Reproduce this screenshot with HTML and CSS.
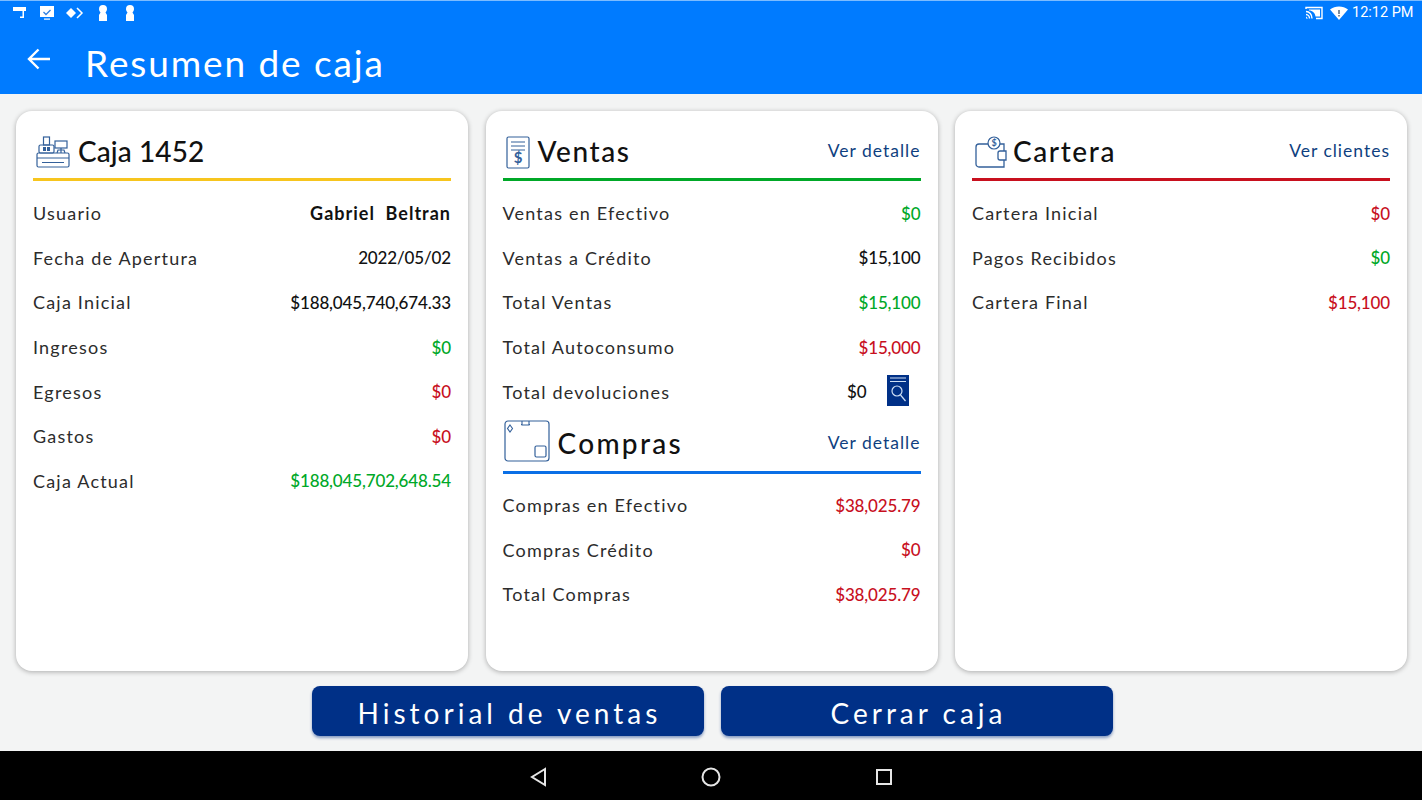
FILE: index.html
```html
<!DOCTYPE html>
<html>
  <head>
    <meta charset="UTF-8" />
    <title>Resumen de caja</title>
    <link rel="stylesheet" href="styles.css">
  </head>
  <body>
    <header class="appbar">
      <div class="status-bar">
        <div class="status-icons">
          <svg class="status-icon" viewBox="0 0 16 16"><path d="M1 2h13v4h-2v7H8v-1.400h2.500V6H1z" fill="#fff"/></svg>
          <svg class="status-icon" viewBox="0 0 16 16"><path d="M1 1h14v11H1z" fill="#fff"/><path d="M4.500 7l2.500 2.500L11.500 5" fill="none" stroke="#2f7fe0" stroke-width="1.300"/><path d="M5 13.500h6v1.200H5z" fill="#fff"/></svg>
          <svg class="status-icon wide" viewBox="0 0 18 16"><path d="M5 3l5 5-5 5-5-5z" fill="#fff"/><path d="M11 3l5 5-5 5" fill="none" stroke="#fff" stroke-width="1.500"/></svg>
          <svg class="status-icon" viewBox="0 0 16 16"><path d="M8 0a4 4 0 0 1 4 4c0 1.500-.8 2.500-1.500 3.500L12 10v6H4v-6l1.500-2.500C4.800 6.500 4 5.500 4 4a4 4 0 0 1 4-4z" fill="#fff"/></svg>
          <svg class="status-icon" viewBox="0 0 16 16"><path d="M8 0a4 4 0 0 1 4 4c0 1.500-.8 2.500-1.500 3.500L12 10v6H4v-6l1.500-2.500C4.800 6.500 4 5.500 4 4a4 4 0 0 1 4-4z" fill="#fff"/></svg>
        </div>
        <div class="status-right">
          <svg class="status-icon cast" viewBox="0 0 18 14"><path d="M1 3V1.500h16v11h-6M1 5.500c3.500 0 6 3 6 7M1 8.500c2 0 3.500 2 3.500 4" fill="none" stroke="#fff" stroke-width="1.400"/><path d="M1 10.500l2 2H1zM4 3.500h11v7h-4.500C10 7 7.500 4.500 4 4.500z" fill="#fff"/></svg>
          <svg class="status-icon wifi" viewBox="0 0 18 14"><path d="M0 3.500C5 -.5 13 -.5 18 3.500L9 14z" fill="#fff"/><path d="M8 4h2v4H8zM8 9h2v1.500H8z" fill="#7d8c9c"/></svg>
          <span class="clock">12:12 PM</span>
        </div>
      </div>
      <div class="toolbar">
        <svg class="back" viewBox="0 0 24 24"><path d="M23 12H2M11.500 2.500L2 12l9.500 9.500" fill="none" stroke="#fff" stroke-width="2.400"/></svg>
        <h1 class="page-title">Resumen de caja</h1>
      </div>
    </header>

    <main class="cards">
      <!-- Caja -->
      <section class="card">
        <div class="card-head line-yellow">
          <svg class="head-icon" viewBox="0 0 34 32"><g fill="none" stroke="#33609a" stroke-width="1.200"><rect x="1" y="17" width="32" height="14" rx="1.500"/><path d="M1 22h32M6 26.500h22"/><rect x="3" y="9" width="15" height="8" rx="1.500"/><rect x="7.500" y="1" width="6" height="8"/><rect x="19" y="5" width="12" height="7"/><path d="M25 12v5M21 17l1-3h6l1 3"/></g><rect x="7" y="11" width="3" height="4" fill="#33609a"/><rect x="11" y="11" width="3" height="4" fill="#33609a"/></svg>
          <h2 class="card-title caja-title">Caja 1452</h2>
        </div>
        <div class="row"><span>Usuario</span><b class="strong">Gabriel&nbsp; Beltran</b></div>
        <div class="row"><span>Fecha de Apertura</span><b>2022/05/02</b></div>
        <div class="row"><span>Caja Inicial</span><b>$188,045,740,674.33</b></div>
        <div class="row"><span>Ingresos</span><b class="green">$0</b></div>
        <div class="row"><span>Egresos</span><b class="red">$0</b></div>
        <div class="row"><span>Gastos</span><b class="red">$0</b></div>
        <div class="row"><span>Caja Actual</span><b class="green">$188,045,702,648.54</b></div>
      </section>

      <!-- Ventas y compras -->
      <section class="card">
        <div class="card-head line-green">
          <svg class="head-icon ventas-icon" viewBox="0 0 24 33"><rect x="1" y="1" width="22" height="31" rx="1.500" fill="none" stroke="#33609a" stroke-width="1.200"/><path d="M5 6h14M5 10h14M5 14h14" stroke="#33609a" stroke-width="1.200"/><text x="12" y="27" class="dollar">$</text></svg>
          <h2 class="card-title">Ventas</h2>
          <a class="head-link">Ver detalle</a>
        </div>
        <div class="row"><span>Ventas en Efectivo</span><b class="green">$0</b></div>
        <div class="row"><span>Ventas a Crédito</span><b>$15,100</b></div>
        <div class="row"><span>Total Ventas</span><b class="green">$15,100</b></div>
        <div class="row"><span>Total Autoconsumo</span><b class="red">$15,000</b></div>
        <div class="row with-action">
          <span>Total devoluciones</span><b>$0</b>
          <svg class="search-doc" viewBox="0 0 22 31"><path d="M0 0h22v31H0z" fill="#003087"/><path d="M3 3h16M3 6.500h16" stroke="#cfe0f5" stroke-width="1.200"/><circle cx="10" cy="16" r="5" fill="none" stroke="#cfe0f5" stroke-width="1.200"/><path d="M13.500 20l5 6" stroke="#cfe0f5" stroke-width="1.200"/></svg>
        </div>
        <div class="card-head line-blue sub-head">
          <svg class="head-icon compras-icon" viewBox="0 0 46 42"><rect x="1" y="1" width="44" height="40" rx="3" fill="none" stroke="#33609a" stroke-width="1.200"/><path d="M6 5l2.500 3.500L6 12 3.500 8.500zM18 1v4h7V1M17 4.500h1M25 4.500h1" fill="none" stroke="#33609a" stroke-width="1.100"/><rect x="31" y="26" width="11" height="11" rx="1.500" fill="none" stroke="#33609a" stroke-width="1.200"/></svg>
          <h2 class="card-title compras-title">Compras</h2>
          <a class="head-link">Ver detalle</a>
        </div>
        <div class="row"><span>Compras en Efectivo</span><b class="red">$38,025.79</b></div>
        <div class="row"><span>Compras Crédito</span><b class="red">$0</b></div>
        <div class="row"><span>Total Compras</span><b class="red">$38,025.79</b></div>
      </section>

      <!-- Cartera -->
      <section class="card">
        <div class="card-head line-red">
          <svg class="head-icon cartera-icon" viewBox="0 0 32 33"><path d="M4 8h25v23H4a3 3 0 0 1-3-3V11a3 3 0 0 1 3-3z" fill="none" stroke="#33609a" stroke-width="1.300"/><path d="M31 15h-6a2 2 0 0 0-2 2v5a2 2 0 0 0 2 2h6z" fill="#fff" stroke="#33609a" stroke-width="1.300"/><circle cx="19" cy="7" r="6" fill="#fff" stroke="#33609a" stroke-width="1.200"/><text x="19" y="10" class="dollar small">$</text></svg>
          <h2 class="card-title">Cartera</h2>
          <a class="head-link">Ver clientes</a>
        </div>
        <div class="row"><span>Cartera Inicial</span><b class="red">$0</b></div>
        <div class="row"><span>Pagos Recibidos</span><b class="green">$0</b></div>
        <div class="row"><span>Cartera Final</span><b class="red">$15,100</b></div>
      </section>
    </main>

    <div class="actions">
      <button class="action-btn">Historial de ventas</button>
      <button class="action-btn">Cerrar caja</button>
    </div>

    <nav class="nav-bar">
      <svg class="nav-icon" viewBox="0 0 20 20"><path d="M16 2L3 10l13 8z" fill="none" stroke="#e6e6e6" stroke-width="2"/></svg>
      <svg class="nav-icon" viewBox="0 0 20 20"><circle cx="10" cy="10" r="8.500" fill="none" stroke="#e6e6e6" stroke-width="2"/></svg>
      <svg class="nav-icon" viewBox="0 0 20 20"><rect x="3" y="3" width="14" height="14" fill="none" stroke="#e6e6e6" stroke-width="2"/></svg>
    </nav>
  </body>
</html>
```

FILE: styles.css
```css
* {
  box-sizing: border-box;
}
html, body {
  height: 100%;
}
body {
  margin: 0;
  width: 1422px;
  height: 800px;
  overflow: hidden;
  background: #f3f4f4;
  font-family: "Lato", "Liberation Sans", sans-serif;
  color: #1d1d1d;
  display: flex;
  flex-direction: column;
}

/* Top blue bar */
.appbar {
  background: #007bff;
  border-top: 1px solid #7cbcff;
  height: 94px;
  color: #fff;
  flex: none;
}
.status-bar {
  height: 23px;
  padding: 0 8px 0 12px;
  display: flex;
  align-items: center;
  justify-content: space-between;
}
.status-icons {
  display: flex;
  align-items: center;
  gap: 11px;
}
.status-icon {
  width: 16px;
  height: 16px;
}
.status-icon.wide {
  width: 18px;
}
.status-right {
  display: flex;
  align-items: center;
  gap: 4px;
}
.status-icon.cast {
  width: 18px;
  height: 14px;
  margin-right: 3px;
}
.status-icon.wifi {
  width: 18px;
  height: 14px;
}
.clock {
  font-family: "Roboto", sans-serif;
  font-size: 14.500px;
  width: 62px;
  white-space: nowrap;
}
.toolbar {
  display: flex;
  align-items: center;
  height: 70px;
  padding: 0 0 0 27px;
}
.back {
  width: 24px;
  height: 24px;
}
.page-title {
  margin: 6px 0 0 34px;
  font-size: 37px;
  font-weight: 400;
  letter-spacing: 1.900px;
}

/* Cards */
.cards {
  display: grid;
  grid-template-columns: repeat(3, 452px);
  column-gap: 17.500px;
  padding: 17px 15px 0 16px;
  flex: none;
  height: 577px;
}
.card {
  background: #fff;
  border-radius: 16px;
  box-shadow: 0 1px 5px rgba(0, 0, 0, 0.3);
  padding: 15px 17px 0;
  font-size: 18px;
}
.card-head {
  display: flex;
  align-items: center;
  height: 55px;
  border-bottom: 3px solid;
  margin-bottom: 10px;
}
.line-yellow { border-color: #f7c51e; }
.line-green { border-color: #00a828; }
.line-red { border-color: #c8101e; }
.line-blue { border-color: #0a6fe6; }
.sub-head {
  height: 63px;
  padding-top: 6px;
  margin-top: -3px;
  margin-bottom: 9px;
}
.head-icon {
  width: 34px;
  height: 32px;
  margin: 0 8px 0 3px;
  flex: none;
}
.ventas-icon {
  width: 24px;
  height: 33px;
  margin-right: 8px;
}
.compras-icon {
  width: 46px;
  height: 42px;
  margin: -6px 8px 0 1px;
}
.cartera-icon {
  width: 32px;
  height: 33px;
  margin-right: 6px;
}
.dollar {
  font-size: 15px;
  font-weight: 700;
  fill: #33609a;
  text-anchor: middle;
}
.dollar.small {
  font-size: 9px;
}
.card-title {
  margin: -2px 0 0;
  font-size: 28px;
  font-weight: 500;
  letter-spacing: 1.600px;
  color: #111;
}
.card-title.caja-title {
  letter-spacing: 0.100px;
}
.card-title.compras-title {
  letter-spacing: 2.300px;
}
.head-link {
  margin-left: auto;
  margin-top: -4px;
  color: #0f3f80;
  font-size: 17.500px;
  letter-spacing: 1px;
}
.sub-head .head-link {
  margin-top: -2px;
}

/* Label / value rows */
.row {
  display: flex;
  align-items: center;
  justify-content: space-between;
  height: 44.600px;
  letter-spacing: 1.200px;
  color: #2c2c2c;
}
.row b {
  font-size: 17px;
  font-weight: 500;
  color: #111;
  letter-spacing: -0.150px;
}
.row b.strong {
  font-size: 18px;
  font-weight: 700;
  letter-spacing: 1px;
}
.row b.green {
  color: #00a828;
}
.row b.red {
  color: #c8101e;
}
.row.with-action b {
  margin-left: auto;
  margin-right: 20px;
}
.search-doc {
  width: 22px;
  height: 31px;
  margin: -2px 12px 0 0;
}

/* Bottom buttons */
.actions {
  display: flex;
  justify-content: center;
  gap: 17px;
  padding: 15px 0 0 2px;
  flex: none;
  height: 80px;
}
.action-btn {
  width: 392px;
  height: 50px;
  padding: 4px 0 0 4px;
  border: none;
  border-radius: 8px;
  background: #003087;
  color: #fff;
  font-family: inherit;
  font-size: 28px;
  letter-spacing: 4px;
  box-shadow: 0 2px 3px rgba(0, 48, 135, 0.45);
}

/* Android nav */
.nav-bar {
  background: #000;
  height: 49px;
  flex: none;
  display: flex;
  align-items: center;
  justify-content: center;
  gap: 152.500px;
  padding-top: 2px;
}
.nav-icon {
  width: 20px;
  height: 20px;
}
```
